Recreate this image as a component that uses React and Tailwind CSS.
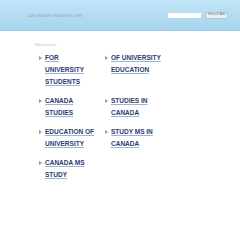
const links = [
  ['FOR', 'UNIVERSITY', 'STUDENTS'],
  ['OF UNIVERSITY', 'EDUCATION'],
  ['CANADA', 'STUDIES'],
  ['STUDIES IN', 'CANADA'],
  ['EDUCATION OF', 'UNIVERSITY'],
  ['STUDY MS IN', 'CANADA'],
  ['CANADA MS', 'STUDY'],
]

function Bullet() {
  return (
    <svg width="3" height="4" viewBox="0 0 3 4" className="mt-[4px] mr-[3px] shrink-0">
      <path d="M0 0 L3 2 L0 4 Z" fill="#9a9a9a" />
    </svg>
  )
}

export default function App() {
  return (
    <div className="min-h-screen bg-white font-['Liberation_Sans',Arial,sans-serif]">
      {/* top bar */}
      <header className="h-[31px] flex items-center justify-between pl-[27px] pr-[12px] bg-gradient-to-b from-[#c1e4f6] to-[#a7d4ee] border-b border-[#9ccbe6]">
        <span className="text-[6px] text-[#8eb3cc] leading-none">canadian-studies.net</span>
        <div className="flex items-center gap-[4px]">
          <div className="w-[33px] h-[5px] bg-white" />
          <div className="w-[23px] h-[7px] bg-[#e6eef3] border border-[#b5c7d3] text-[3.5px] text-[#777] flex items-center justify-center leading-none">
            Search Ads
          </div>
        </div>
      </header>

      <main className="pl-[35px] pt-[13px]">
        <div className="text-[3.5px] text-[#bbbbbb] leading-none">Related Links</div>
        <div className="grid grid-cols-[66px_66px] gap-y-[7px] ml-[4px] mt-[4px]">
          {links.map((l, i) => (
            <div key={i} className="flex">
              <Bullet />
              <a href="#" className="text-[6.5px] leading-[12px] font-bold underline decoration-[#9fb3d8] text-[#2b3d6c]">
                {l.map((w, j) => (
                  <div key={j}>{w}</div>
                ))}
              </a>
            </div>
          ))}
        </div>
      </main>
    </div>
  )
}
